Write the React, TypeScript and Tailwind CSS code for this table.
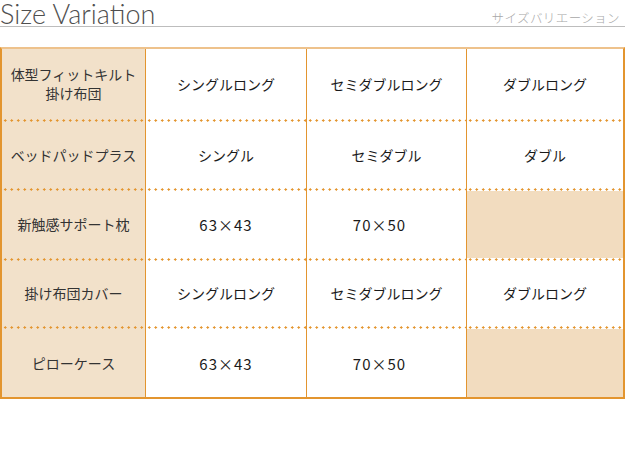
import React from "react";

const dots =
  "h-[3px] w-full bg-[radial-gradient(circle,#e3952f_1px,transparent_1.3px)] bg-[length:6.5px_3px] bg-repeat-x";

type Cell = { text?: string; empty?: boolean; num?: boolean };

const rows: { label: string[]; cells: Cell[]; h: string }[] = [
  { label: ["体型フィットキルト", "掛け布団"], cells: [{ text: "シングルロング" }, { text: "セミダブルロング" }, { text: "ダブルロング" }], h: "h-[73px]" },
  { label: ["ベッドパッドプラス"], cells: [{ text: "シングル" }, { text: "セミダブル" }, { text: "ダブル" }], h: "h-[69px]" },
  { label: ["新触感サポート枕"], cells: [{ text: "63×43", num: true }, { text: "70×50", num: true }, { empty: true }], h: "h-[70px]" },
  { label: ["掛け布団カバー"], cells: [{ text: "シングルロング" }, { text: "セミダブルロング" }, { text: "ダブルロング" }], h: "h-[68px]" },
  { label: ["ピローケース"], cells: [{ text: "63×43", num: true }, { text: "70×50", num: true }, { empty: true }], h: "h-[68px]" },
];

const widths = ["w-[144px]", "w-[161px]", "w-[160px]", "flex-1"];

export default function App() {
  return (
    <div
      className="w-[625px] h-[450px] bg-white text-[#222]"
      style={{ fontFamily: '"Noto Sans CJK JP", "Noto Sans", sans-serif' }}
    >
      <div className="flex items-start justify-between h-[27px] border-b border-[#bdbdbd]">
        <div
          className="text-[27px] leading-[27px] font-light text-[#4f4f4f] tracking-[0px] whitespace-nowrap"
          style={{ fontFamily: 'Lato, "Open Sans", sans-serif' }}
        >
          Size Variation
        </div>
        <div className="text-[12.5px] leading-[14px] text-[#a8a8a8] font-light pr-[5px] mt-[11px] tracking-[0.4px]">
          サイズバリエーション
        </div>
      </div>
      <div className="mt-[20px] w-[625px] border-t-2 border-t-[#eec28c] border-l-2 border-r-2 border-b-2 border-[#e3952f] border-r-[#e3952f]">
        {rows.map((row, ri) => {
          const last = ri === rows.length - 1;
          return (
            <div key={ri} className={`flex ${row.h}`}>
              <div className={`${widths[0]} flex flex-col bg-[#f2e1ca] border-r border-[#e3952f]`}>
                <div className="flex-1 flex flex-col items-center justify-center text-[14px] leading-[19px] text-[#333]">
                  {row.label.map((l, i) => (
                    <span key={i}>{l}</span>
                  ))}
                </div>
                {!last && <div className={dots} />}
              </div>
              {row.cells.map((c, ci) => (
                <div
                  key={ci}
                  className={`${widths[ci + 1]} flex flex-col ${ci < 2 ? "border-r border-[#e3952f]" : ""}`}
                >
                  {c.empty ? (
                    <div className="flex-1 bg-[#f2dcbf]" />
                  ) : (
                    <div
                      className={`flex-1 flex items-center justify-center leading-[19px] text-[#1a1a1a] ${
                        c.num ? "text-[15px] tracking-[1px]" : "text-[14px]"
                      } ${c.num && ci === 1 ? "pr-[14px]" : ""}`}
                    >
                      {c.text}
                    </div>
                  )}
                  {!last && <div className={dots} />}
                </div>
              ))}
            </div>
          );
        })}
      </div>
    </div>
  );
}
